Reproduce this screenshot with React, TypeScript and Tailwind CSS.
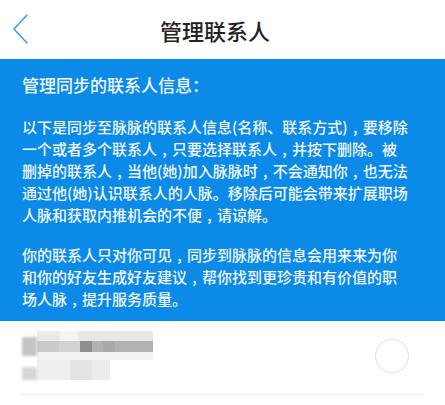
import React from 'react';

const FONT = { fontFamily: '"Noto Sans CJK SC", "Noto Sans", sans-serif' };

const PARA_ONE = [
  '以下是同步至脉脉的联系人信息(名称、联系方式)，要移除',
  '一个或者多个联系人，只要选择联系人，并按下删除。被',
  '删掉的联系人，当他(她)加入脉脉时，不会通知你，也无法',
  '通过他(她)认识联系人的人脉。移除后可能会带来扩展职场',
  '人脉和获取内推机会的不便，请谅解。',
];

const PARA_TWO = [
  '你的联系人只对你可见，同步到脉脉的信息会用来来为你',
  '和你的好友生成好友建议，帮你找到更珍贵和有价值的职',
  '场人脉，提升服务质量。',
];

// the source shows the comma centred in a full-width cell
function Line({ text }: { text: string }) {
  const parts = text.split('，');
  return (
    <div className="whitespace-nowrap">
      {parts.map((part, i) => (
        <React.Fragment key={i}>
          {part}
          {i < parts.length - 1 && <span className="inline-block w-[15px] text-center">,</span>}
        </React.Fragment>
      ))}
    </div>
  );
}

function Mosaic() {
  // pixelated contact name, blurred in the source screenshot
  return (
    <div className="flex">
      <div className="flex flex-col w-[15px]">
        <div className="h-[6px]" />
        <div className="h-[19px] bg-[#c4c4c4] blur-[1.5px]" />
        <div className="h-[11px]" />
        <div className="h-[13px] bg-[#d6d6d6] blur-[1.5px]" />
      </div>
      <div className="flex flex-col">
        <div className="flex h-[10px]">
          <div className="w-[23px] bg-[#ebebeb]" />
          <div className="w-[18px] bg-[#f4f4f4]" />
          <div className="w-[75px] bg-[#e8e8e8]" />
        </div>
        <div className="flex h-[11px]">
          <div className="w-[22px] bg-[#cbcbcb]" />
          <div className="w-[21px] bg-[#d2d2d2]" />
          <div className="w-[12px] bg-[#8f8f8f]" />
          <div className="w-[11px] bg-[#b3b3b3]" />
          <div className="w-[12px] bg-[#a9a9a9]" />
          <div className="w-[38px] bg-[#b1b1b1]" />
        </div>
        <div className="flex h-[8px]">
          <div className="w-[116px] bg-[#f2f2f2]" />
        </div>
        <div className="flex h-[20px]">
          <div className="w-[33px] bg-[#efefef]" />
          <div className="w-[22px] bg-[#e3e3e3]" />
          <div className="w-[18px] bg-[#ececec]" />
        </div>
      </div>
    </div>
  );
}

export default function App() {
  return (
    <div className="w-[445px] h-[405px] bg-white overflow-hidden" style={FONT}>
      {/* Header */}
      <div className="relative h-[59px] flex items-center justify-center pr-[15px]">
        <svg
          className="absolute left-[12px] top-[13px]"
          width="20"
          height="32"
          viewBox="0 0 20 32"
          fill="none"
        >
          <path d="M15 2 L2 16 L15 30" stroke="#3f9fe0" strokeWidth="1.6" strokeLinecap="round" strokeLinejoin="round" />
        </svg>
        <span className="text-[22px] leading-[28px] font-medium text-[#222222]">管理联系人</span>
      </div>

      {/* Info block */}
      <div className="bg-[#0b8ae8] px-[22px] pt-[14px] pb-[11px] text-[#f3f8fe] font-medium">
        <div className="text-[17px] leading-[24px]">管理同步的联系人信息：</div>
        <div className="mt-[19px] text-[15px] leading-[22px]">
          {PARA_ONE.map((line) => (
            <Line key={line} text={line} />
          ))}
        </div>
        <div className="mt-[18px] text-[15px] leading-[22px]">
          {PARA_TWO.map((line) => (
            <Line key={line} text={line} />
          ))}
        </div>
      </div>

      {/* Contact row */}
      <div className="mx-[20px] h-[74px] pb-[4px] flex items-center justify-between border-b border-[#f0f0f0]">
        <div className="pl-[2px]">
          <Mosaic />
        </div>
        <div className="w-[34px] h-[34px] rounded-full border-[1.5px] border-[#dddddd] mr-[16px]" />
      </div>
    </div>
  );
}
